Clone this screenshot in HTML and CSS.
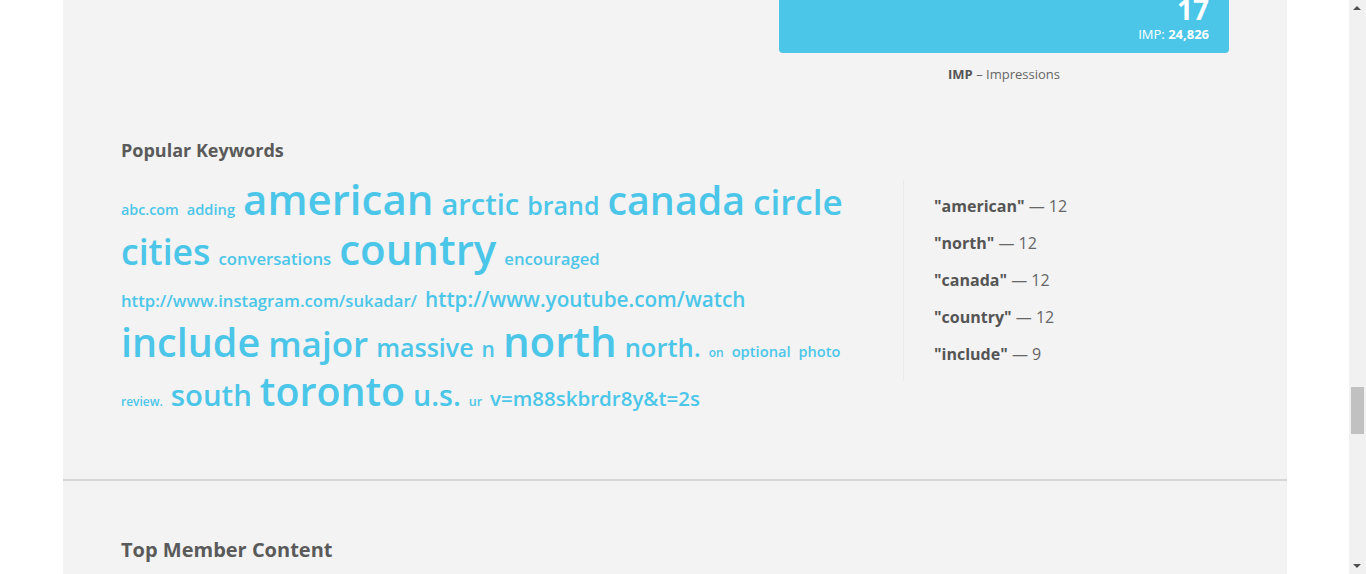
FILE: index.html
```html
<!DOCTYPE html>
<html>
<head>
<meta charset="utf-8">
<link rel="stylesheet" href="styles.css">
</head>
<body>
<div class="panel">
  <section class="stats">
    <div class="stat-col">
      <div class="card">
        <div class="num">17</div>
        <div class="imp">IMP: <b>24,826</b></div>
      </div>
      <div class="legend"><b>IMP</b> – Impressions</div>
    </div>
  </section>

  <section class="keywords">
    <h2 class="title">Popular Keywords</h2>
    <div class="kw-row">
      <div class="cloud"><span class="w" style="font-size:14.3px">abc.com</span><span class="w" style="font-size:14.7px">adding</span><span class="w" style="font-size:42px">american</span><span class="w" style="font-size:29px">arctic</span><span class="w" style="font-size:25px">brand</span><span class="w" style="font-size:39.4px">canada</span><span class="w" style="font-size:35px">circle</span><span class="w" style="font-size:35.6px">cities</span><span class="w" style="font-size:16.7px">conversations</span><span class="w" style="font-size:42px">country</span><span class="w" style="font-size:16.7px">encouraged</span><span class="w" style="font-size:16.7px">http://www.instagram.com/sukadar/</span><span class="w" style="font-size:20.7px">http://www.youtube.com/watch</span><span class="w" style="font-size:39.5px">include</span><span class="w" style="font-size:35px">major</span><span class="w" style="font-size:25px">massive</span><span class="w" style="font-size:21px">n</span><span class="w" style="font-size:42px">north</span><span class="w" style="font-size:25.5px">north.</span><span class="w" style="font-size:12px">on</span><span class="w" style="font-size:14.7px">optional</span><span class="w" style="font-size:14.5px">photo</span><span class="w" style="font-size:12px">review.</span><span class="w" style="font-size:29.3px">south</span><span class="w" style="font-size:39.4px">toronto</span><span class="w" style="font-size:28.5px">u.s.</span><span class="w" style="font-size:12.5px">ur</span><span class="w" style="font-size:20.5px">v=m88skbrdr8y&amp;t=2s</span></div>
      <ul class="top-list">
        <li><b>"american"</b> — 12</li>
        <li><b>"north"</b> — 12</li>
        <li><b>"canada"</b> — 12</li>
        <li><b>"country"</b> — 12</li>
        <li><b>"include"</b> — 9</li>
      </ul>
    </div>
  </section>

  <section class="members">
    <h2 class="title title-lg">Top Member Content</h2>
  </section>
</div>

<div class="scrollbar">
  <div class="arrow up"></div>
  <div class="thumb"></div>
  <div class="arrow down"></div>
</div>
</body>
</html>
```

FILE: styles.css
```css
html, body {
  margin: 0;
  padding: 0;
  background: #ffffff;
  font-family: "Open Sans", "Liberation Sans", sans-serif;
  overflow: hidden;
}

.panel {
  margin-left: 63px;
  width: 1224px;
  min-height: 700px;
  background: #f3f3f3;
}

.stats {
  display: flex;
  justify-content: flex-end;
  padding: 0 58px;
}

.stat-col {
  width: 450px;
  margin-top: -5px;
}

.card {
  background: #4bc6e9;
  border-radius: 0 0 4px 4px;
  padding: 0 20px 10px;
  text-align: right;
  color: #ffffff;
}

.num {
  font-size: 28px;
  line-height: 28px;
  font-weight: 700;
}

.imp {
  font-size: 13px;
  line-height: 18px;
  margin-top: 2px;
}

.imp b {
  font-weight: 700;
}

.legend {
  text-align: center;
  margin-top: 11px;
  font-size: 13px;
  line-height: 20px;
  color: #666666;
}

.legend b {
  color: #555555;
  font-weight: 700;
}

.keywords {
  padding: 54px 58px 58px;
  border-bottom: 2px solid #d6d6d6;
}

.title {
  margin: 0;
  font-size: 18px;
  line-height: 24px;
  font-weight: 700;
  color: #5a5a5a;
}

.title-lg {
  font-size: 20px;
  line-height: 26px;
}

.kw-row {
  display: flex;
  align-items: flex-start;
  margin-top: 18px;
}

.cloud {
  width: 752px;
  padding-right: 30px;
  font-size: 12px;
  line-height: 38px;
}

.w {
  display: inline-block;
  margin-right: 8px;
  color: #4bc6e9;
  font-weight: 600;
  line-height: 38px;
}

.top-list {
  flex: 1;
  list-style: none;
  margin: 0;
  padding: 8px 0 8px 30px;
  border-left: 1px solid #e9e9e9;
  font-size: 16px;
  color: #666666;
}

.top-list li {
  line-height: 37px;
}

.top-list b {
  color: #555555;
  font-weight: 700;
}

.members {
  padding: 56px 58px;
}

.scrollbar {
  position: fixed;
  top: 0;
  right: 0;
  width: 17px;
  height: 100%;
  background: #f1f1f1;
}

.thumb {
  position: absolute;
  left: 2px;
  top: 387px;
  width: 13px;
  height: 47px;
  background: #c1c1c1;
}

.arrow {
  position: absolute;
  left: 4px;
  width: 0;
  height: 0;
  border-left: 4px solid transparent;
  border-right: 4px solid transparent;
}

.arrow.up {
  top: 6px;
  border-bottom: 4px solid #505050;
}

.arrow.down {
  bottom: 6px;
  border-top: 4px solid #505050;
}
```
